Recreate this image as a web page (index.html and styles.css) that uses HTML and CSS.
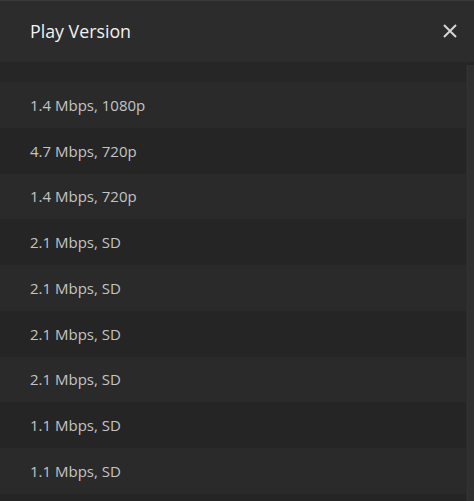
FILE: index.html
```html
<!DOCTYPE html>
<html>
<head>
<meta charset="utf-8">
<link rel="stylesheet" href="styles.css">
</head>
<body>
<div class="modal">
  <div class="header">
    <div class="title">Play Version</div>
    <button class="close" aria-label="Close">
      <svg width="14" height="14" viewBox="0 0 14 14"><path d="M1 1L13 13M13 1L1 13" stroke="#d6d6d6" stroke-width="2" fill="none"/></svg>
    </button>
  </div>
  <div class="body">
    <div class="list">
      <div class="spacer"></div>
      <div class="row">1.4 Mbps, 1080p</div>
      <div class="row">4.7 Mbps, 720p</div>
      <div class="row">1.4 Mbps, 720p</div>
      <div class="row">2.1 Mbps, SD</div>
      <div class="row">2.1 Mbps, SD</div>
      <div class="row">2.1 Mbps, SD</div>
      <div class="row">2.1 Mbps, SD</div>
      <div class="row">1.1 Mbps, SD</div>
      <div class="row">1.1 Mbps, SD</div>
    </div>
    <div class="scrollbar"></div>
  </div>
</div>
</body>
</html>
```

FILE: styles.css
```css
html, body {
  margin: 0;
  padding: 0;
  background: #252525;
  height: 100%;
  overflow: hidden;
}
.modal {
  width: 474px;
  height: 501px;
  display: flex;
  flex-direction: column;
  font-family: "Open Sans", "Noto Sans", sans-serif;
}
.header {
  height: 61px;
  border-top: 1px solid #3a3a3a;
  background: #2c2c2c;
  display: flex;
  align-items: center;
  justify-content: space-between;
  padding: 0 17px 0 30px;
  flex-shrink: 0;
}
.title {
  color: #f1f1f1;
  font-size: 17.8px;
  margin-top: -1px;
}
.close {
  background: none;
  border: none;
  padding: 0;
  width: 14px;
  height: 14px;
  display: flex;
  margin-top: -1px;
}
.body {
  flex: 1;
  display: flex;
  min-height: 0;
}
.list {
  flex: 1;
  display: flex;
  flex-direction: column;
  border-right: 1px solid #2b2b2b;
}
.spacer {
  height: 20px;
  background: #262626;
  flex-shrink: 0;
}
.row {
  height: 45.75px;
  flex-shrink: 0;
  display: flex;
  align-items: center;
  padding-left: 30px;
  color: #c4c4c4;
  font-size: 15px;
  background: #252525;
}
.row:nth-child(even) {
  background: #2a2a2a;
}
.scrollbar {
  width: 6px;
  margin-top: 3px;
  background: #2f2f2f;
  border-left: 1px solid #333;
}
```
